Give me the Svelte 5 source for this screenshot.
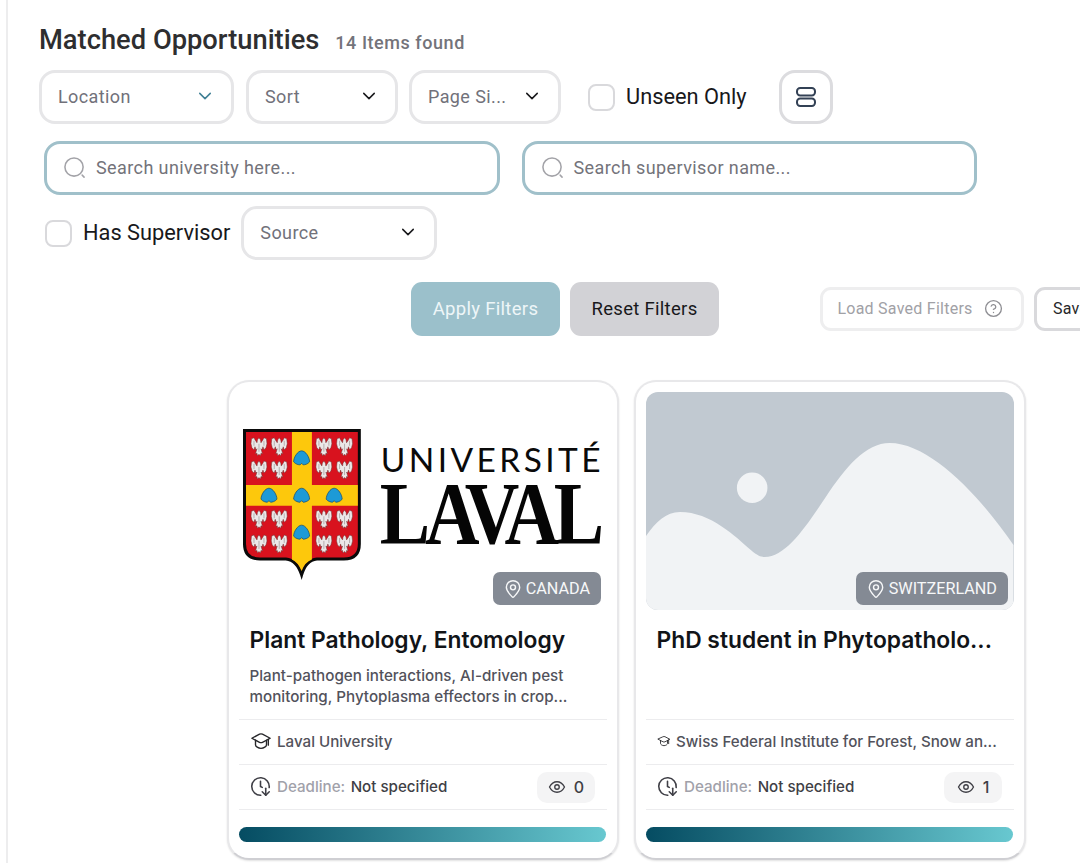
<script>
  const eagleX = [20, 40.3, 85, 105.7];
  const eagleY = [54.7, 78, 127.3, 152];
  const shells = [[62.7, 66.3], [30, 103.7], [62.7, 103.7], [95.3, 103.7], [62.7, 140.7]];
  const eagles = eagleY.flatMap((y) => eagleX.map((x) => [x, y]));
</script>

{#snippet chevron(cls = '')}
  <svg class="chev {cls}" viewBox="0 0 24 24" fill="none" stroke="currentColor" stroke-width="2" stroke-linecap="round" stroke-linejoin="round"><path d="m5 8.500 7 7 7-7" /></svg>
{/snippet}

{#snippet searchIcon()}
  <svg class="search-icon" viewBox="0 0 24 24" fill="none" stroke="#a3a3a8" stroke-width="1.6" stroke-linecap="round"><circle cx="11.5" cy="11.5" r="9.5" /><path d="m22 22-2-2" /></svg>
{/snippet}

{#snippet pin()}
  <svg class="pin" viewBox="0 0 24 24" fill="none" stroke="currentColor" stroke-width="1.7" stroke-linecap="round" stroke-linejoin="round"><path d="M20 10c0 5-5.500 9.500-7 11.400a1.300 1.300 0 0 1-2 0C9.500 19.500 4 15 4 10a8 8 0 0 1 16 0Z" /><circle cx="12" cy="10" r="3" /></svg>
{/snippet}

{#snippet cap(cls)}
  <svg class={cls} viewBox="0 0 24 24" fill="none" stroke="#27272a" stroke-width="1.5" stroke-linecap="round" stroke-linejoin="round"><path d="M10.400 4.600a3.500 3.500 0 0 1 3.200 0L22 9l-8.400 4.400a3.500 3.500 0 0 1-3.200 0L2 9z" /><path d="M6 11.200V16c0 2 3 4 6 4s6-2 6-4v-4.800" /><path d="M20 10v6.500" /></svg>
{/snippet}

{#snippet meta(count)}
  <div class="row deadline">
    <svg class="clock" viewBox="0 0 24 24" fill="none" stroke="#3f3f46" stroke-width="1.8" stroke-linecap="round" stroke-linejoin="round"><path d="M12 6v6l2 1" /><path d="M12.337 21.994a10 10 0 1 1 9.588-8.767" /><path d="m14 18 4 4 4-4" /><path d="M18 14v8" /></svg>
    <span class="dl">Deadline:</span>
    <span class="ns">Not specified</span>
    <span class="views">
      <svg class="eye" viewBox="0 0 24 24" fill="none" stroke="#3f3f46" stroke-width="1.8" stroke-linecap="round" stroke-linejoin="round"><path d="M2 12s3.600-7 10-7 10 7 10 7-3.600 7-10 7-10-7-10-7Z" /><circle cx="12" cy="12" r="3" /></svg>
      {count}
    </span>
  </div>
{/snippet}

<div class="page">
  <main class="main">
    <header class="head">
      <h1>Matched Opportunities</h1>
      <span class="found">14 Items found</span>
    </header>

    <div class="filters">
      <div class="select w195"><span>Location</span>{@render chevron('teal')}</div>
      <div class="select w152"><span>Sort</span>{@render chevron()}</div>
      <div class="select w152"><span>Page Si...</span>{@render chevron()}</div>
      <span class="box unseen"></span>
      <span class="check-label">Unseen Only</span>
      <button class="icon-btn" aria-label="Layout">
        <svg viewBox="0 0 20 20" fill="none" stroke="#334155" stroke-width="2"><rect x="1" y="1" width="18" height="7.500" rx="3.200" /><rect x="1" y="11.500" width="18" height="7.500" rx="3.200" /></svg>
      </button>
    </div>

    <div class="searches">
      <div class="search">{@render searchIcon()}<span>Search university here...</span></div>
      <div class="search">{@render searchIcon()}<span>Search supervisor name...</span></div>
    </div>

    <div class="third">
      <span class="box"></span>
      <span class="check-label">Has Supervisor</span>
      <div class="select source"><span>Source</span>{@render chevron()}</div>
    </div>

    <div class="actions">
      <button class="btn apply">Apply Filters</button>
      <button class="btn reset">Reset Filters</button>
      <button class="ghost load">
        Load Saved Filters
        <svg viewBox="0 0 24 24" fill="none" stroke="#8e8e93" stroke-width="1.700" stroke-linecap="round" stroke-linejoin="round"><circle cx="12" cy="12" r="10" /><path d="M9.100 9a3 3 0 0 1 5.800 1c0 2-3 3-3 3" /><path d="M12 17h.01" /></svg>
      </button>
      <button class="ghost save">Save Filters</button>
    </div>

    <section class="cards">
      <article class="card">
        <div class="media logo">
          <svg class="art" viewBox="0 0 368 218">
            <path d="M5.500 38.500H120.500V152Q120.500 167 105 167H78Q67 168 62.700 183Q58 168 47 167H21Q5.500 167 5.500 152Z" fill="#d8121e" stroke="#0a0a0a" stroke-width="3" />
            <path d="M53 40H73V93H119V113.700H73V167.500Q66 170 62.700 179Q59 170 53 167.500V113.700H7V93H53Z" fill="#fdc80c" />
            {#each eagles as [x, y]}
              <g transform="translate({x} {y})">
                <path fill="#ece8e8" stroke="#6b3434" stroke-width=".5" d="M0-9 1.500-7 2-4 4-7 5-9 7.500-8 8-3 7 1 5 3 4 0 3 3 2 2 3.500 7 2 6.500 1.500 9 0 7.500-1.500 9-2 6.500-3.500 7-2 2-3 3-4 0-5 3-7 1-8-3-7.500-8-5-9-4-7-2-4-1.500-7Z" />
                <path fill="none" stroke="#8d8888" stroke-width=".6" d="M5-6 5-1M-5-6-5-1M0-3V5" />
              </g>
            {/each}
            {#each shells as [x, y]}
              <path transform="translate({x} {y})" fill="#1d9ad6" stroke="#164a6b" stroke-width=".7" d="M0-7.500C4-7.500 8-1 8 3.500 6 6 3 6.500 1.500 6.500L0 5-1.500 6.500C-3 6.500-6 6-8 3.500-8-1-4-7.500 0-7.500Z" />
            {/each}
            <text class="univ" x="142" y="80" textLength="220" lengthAdjust="spacing">UNIVERSITÉ</text>
            <text class="laval" transform="translate(141 151) scale(.86 1)">LAVAL</text>
          </svg>
          <span class="badge">{@render pin()}CANADA</span>
        </div>
        <div class="copy">
          <h2>Plant Pathology, Entomology</h2>
          <p>Plant-pathogen interactions, AI-driven pest<br />monitoring, Phytoplasma effectors in crop...</p>
        </div>
        <div class="row uni">{@render cap('cap')}<span>Laval University</span></div>
        {@render meta(0)}
        <div class="bar"></div>
      </article>

      <article class="card">
        <div class="media placeholder">
          <svg class="art" viewBox="0 0 368 218" preserveAspectRatio="none">
            <circle cx="106.300" cy="95.700" r="15.300" fill="#f1f3f5" />
            <path fill="#f1f3f5" d="M0 144C10 130 20 120 34 120C65 120 90 145 105 158C112 164 115 165 119 165C140 165 160 135 180 105C200 75 220 51 244 51C285 51 335 105 368 153V218H0Z" />
          </svg>
          <span class="badge">{@render pin()}SWITZERLAND</span>
        </div>
        <div class="copy">
          <h2>PhD student in Phytopatholo...</h2>
        </div>
        <div class="row uni">{@render cap('cap small')}<span>Swiss Federal Institute for Forest, Snow an...</span></div>
        {@render meta(1)}
        <div class="bar"></div>
      </article>
    </section>
  </main>
</div>

<style>
  :global(body) {
    margin: 0;
    background: #fff;
  }
  .page {
    width: 1080px;
    height: 863px;
    overflow: hidden;
    background: #fff;
    font-family: Roboto, "Liberation Sans", sans-serif;
  }
  .main {
    margin-left: 6px;
    border-left: 2px solid #ededee;
    height: 863px;
    box-sizing: border-box;
    padding-top: 20px;
    width: 1200px;
  }
  .head {
    display: flex;
    align-items: baseline;
    gap: 16px;
    height: 38px;
    padding-left: 31px;
  }
  h1 {
    margin: 0;
    font-size: 27.300px;
    line-height: 40px;
    font-weight: 500;
    color: #2e2e30;
  }
  .found {
    font-size: 18px;
    font-weight: 500;
    color: #73737a;
    letter-spacing: 0.55px;
  }
  .filters {
    display: flex;
    align-items: center;
    margin-top: 12px;
    padding-left: 31px;
    height: 54px;
  }
  .select {
    box-sizing: border-box;
    height: 54px;
    border: 3px solid #e6e6e8;
    border-radius: 16px;
    display: flex;
    align-items: center;
    justify-content: space-between;
    padding: 0 17px 2px 16px;
    font-size: 18px;
    letter-spacing: 0.4px;
    color: #71717a;
    background: #fff;
    flex: none;
  }
  .w195 { width: 195px; margin-right: 12px; }
  .w152 { width: 152px; margin-right: 11px; }
  .chev {
    width: 18px;
    height: 18px;
    color: #18181b;
  }
  .chev.teal {
    color: #3f7f94;
  }
  .box {
    box-sizing: border-box;
    width: 27px;
    height: 27px;
    border: 2.500px solid #d9d9dc;
    border-radius: 8px;
    flex: none;
  }
  .unseen {
    margin-left: 16px;
  }
  .check-label {
    margin-left: 11px;
    padding-bottom: 2px;
    font-size: 21.800px;
    color: #18181b;
    flex: none;
  }
  .icon-btn {
    box-sizing: border-box;
    width: 54px;
    height: 54px;
    margin-left: 32.500px;
    border: 3px solid #dcdcdf;
    border-radius: 16px;
    background: #fff;
    padding: 0;
    display: flex;
    align-items: center;
    justify-content: center;
    flex: none;
  }
  .icon-btn svg {
    width: 20px;
    height: 20px;
  }
  .searches {
    display: flex;
    gap: 22px;
    margin-top: 17px;
    padding-left: 36px;
  }
  .search {
    box-sizing: border-box;
    width: 455.500px;
    height: 54px;
    border: 3px solid #a0c0ca;
    border-radius: 16px;
    display: flex;
    align-items: center;
    padding: 0 0 2px 16px;
    gap: 10px;
    font-size: 18px;
    letter-spacing: 0.4px;
    color: #73737a;
  }
  .search-icon {
    width: 23px;
    height: 23px;
  }
  .third {
    display: flex;
    align-items: center;
    margin-top: 11px;
    padding-left: 37px;
    height: 54px;
  }
  .source {
    width: 196px;
    margin-left: 11px;
  }
  .actions {
    display: flex;
    align-items: center;
    margin-top: 22px;
    padding-left: 403px;
    height: 54px;
  }
  .btn {
    box-sizing: border-box;
    width: 149px;
    height: 54px;
    border: 0;
    border-radius: 11px;
    font: 400 18.500px Roboto, sans-serif;
    letter-spacing: 0.3px;
    padding: 0;
    flex: none;
  }
  .apply {
    background: #9bc0cb;
    color: #eef6f8;
  }
  .reset {
    background: #d2d2d6;
    color: #18181b;
    margin-left: 10px;
  }
  .ghost {
    box-sizing: border-box;
    height: 44px;
    background: #fff;
    border-radius: 11px;
    font: 400 16px Roboto, sans-serif;
    letter-spacing: 0.25px;
    padding: 0 0 2px;
    flex: none;
  }
  .load {
    width: 204px;
    margin-left: 101px;
    border: 3px solid #eeeeef;
    color: #a1a1a6;
    display: flex;
    align-items: center;
    justify-content: center;
    gap: 11px;
    padding-right: 4px;
  }
  .load svg {
    width: 19px;
    height: 19px;
  }
  .save {
    width: 150px;
    margin-left: 10px;
    border: 3px solid #d9d9dc;
    color: #27272a;
    text-align: left;
    padding-left: 16px;
  }
  .cards {
    display: flex;
    gap: 15.500px;
    margin-top: 44px;
    padding-left: 219px;
  }
  .card {
    box-sizing: border-box;
    width: 391.500px;
    height: 480px;
    border: 2px solid #e8e8ea;
    border-bottom-color: #cfcfd3;
    border-radius: 22px;
    padding: 10px;
    background: #fff;
    font-family: Inter, sans-serif;
    box-shadow: 0 1px 2px rgba(0, 0, 0, 0.12);
  }
  .media {
    position: relative;
    height: 218px;
    border-radius: 12px;
    overflow: hidden;
  }
  .placeholder {
    background: #c1c9d1;
  }
  .art {
    display: block;
    width: 100%;
    height: 100%;
  }
  .univ {
    font-family: Lato, "Liberation Sans", sans-serif;
    font-size: 33.500px;
    fill: #0a0a0a;
  }
  .laval {
    font-family: "Liberation Serif", serif;
    font-weight: 700;
    font-size: 88px;
    letter-spacing: -6px;
    fill: #050505;
  }
  .badge {
    position: absolute;
    right: 5.500px;
    bottom: 5px;
    height: 33px;
    display: flex;
    align-items: center;
    gap: 2.500px;
    padding: 0 11px 0 10px;
    border-radius: 7px;
    background: #848a94;
    color: #f7f8f9;
    font: 400 16.200px Roboto, sans-serif;
  }
  .pin {
    width: 20px;
    height: 20px;
  }
  .copy {
    box-sizing: border-box;
    height: 110px;
    padding: 15px 10.500px 0;
    border-bottom: 1px solid #ececee;
  }
  h2 {
    margin: 0;
    font-size: 22.800px;
    line-height: 30px;
    font-weight: 600;
    color: #111418;
  }
  p {
    margin: 10px 0 0;
    font-size: 15.200px;
    line-height: 21px;
    font-weight: 500;
    color: #52525b;
  }
  .row {
    box-sizing: border-box;
    height: 45px;
    border-bottom: 1px solid #ececee;
    display: flex;
    align-items: center;
    padding: 0 11.500px 2px 11px;
    font-size: 15.150px;
    font-weight: 500;
    white-space: nowrap;
  }
  .uni {
    color: #52525b;
  }
  .cap {
    width: 22px;
    height: 22px;
    margin-right: 5px;
    flex: none;
  }
  .cap.small {
    width: 14px;
    height: 14px;
    margin-right: 5px;
  }
  .clock {
    width: 21px;
    height: 21px;
    margin-right: 6px;
    flex: none;
  }
  .dl {
    color: #a1a1aa;
    margin-right: 5.500px;
  }
  .ns {
    color: #3f3f46;
  }
  .views {
    margin-left: auto;
    box-sizing: border-box;
    width: 58px;
    height: 31px;
    margin-bottom: -2px;
    border-radius: 10px;
    background: #f4f4f5;
    display: flex;
    align-items: center;
    justify-content: center;
    gap: 8px;
    font-size: 16px;
    color: #3f3f46;
  }
  .eye {
    width: 18px;
    height: 18px;
  }
  .bar {
    height: 15px;
    margin-top: 17px;
    margin-right: 0.500px;
    border-radius: 8px;
    background: linear-gradient(90deg, #054c62, #68c8d0);
  }
</style>
